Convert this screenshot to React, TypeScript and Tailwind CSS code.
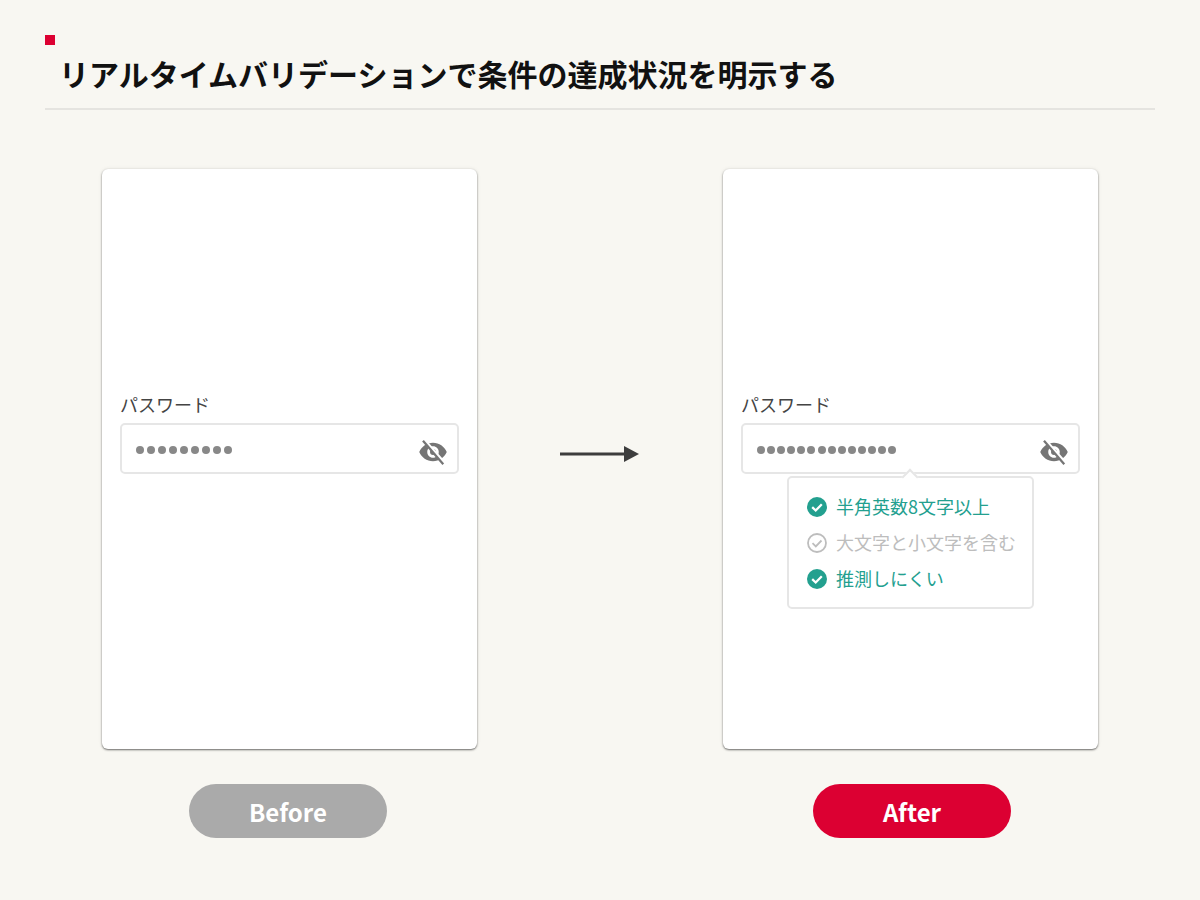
const FONT = "font-['Noto_Sans_CJK_JP','Noto_Sans',sans-serif]";

function EyeOff() {
  return (
    <svg width="30" height="30" viewBox="0 0 24 24" className="shrink-0">
      <path
        fill="#757575"
        fillRule="evenodd"
        d="M12 4.600C7 4.600 2.900 7.700 1 12c1.900 4.300 6 7.400 11 7.400s9.100-3.100 11-7.400c-1.900-4.300-6-7.400-11-7.400zM12 16.600c-2.600 0-4.600-2-4.600-4.600s2-4.600 4.600-4.600 4.600 2 4.600 4.600-2 4.600-4.600 4.600zm0-7c-1.350 0-2.400 1.050-2.400 2.400s1.050 2.400 2.400 2.400 2.400-1.050 2.400-2.400-1.050-2.400-2.400-2.400z"
      />
      <path d="M5 2.800 21 21" stroke="#ffffff" strokeWidth="2.800" />
      <path d="M4 3 20.200 21.800" stroke="#757575" strokeWidth="1.800" />
    </svg>
  );
}

function Check({ done }: { done: boolean }) {
  if (done) {
    return (
      <svg width="20" height="20" viewBox="0 0 20 20" className="shrink-0">
        <circle cx="10" cy="10" r="10" fill="#23a08f" />
        <path d="M5.200 10.200 8.700 13.500 14.800 7.300" fill="none" stroke="#ffffff" strokeWidth="2.300" />
      </svg>
    );
  }
  return (
    <svg width="20" height="20" viewBox="0 0 20 20" className="shrink-0">
      <circle cx="10" cy="10" r="9" fill="none" stroke="#bdbdbd" strokeWidth="1.800" />
      <path d="M5.500 10.200 8.800 13.400 14.500 7.500" fill="none" stroke="#bdbdbd" strokeWidth="1.800" />
    </svg>
  );
}

function PasswordField({ count, dotGap }: { count: number; dotGap: string }) {
  return (
    <div>
      <p className="mb-[5px] text-[18px] leading-[27px] text-[#444444]">パスワード</p>
      <div className="flex h-[51px] items-center justify-between rounded-[5px] border-2 border-[#e6e6e6] bg-white pl-[14px] pr-[9px]">
        <div className={`mt-[4px] flex ${dotGap}`}>
          {Array.from({ length: count }).map((_, i) => (
            <span key={i} className="size-[8px] rounded-full bg-[#888888]" />
          ))}
        </div>
        <div className="mt-[8px]">
          <EyeOff />
        </div>
      </div>
    </div>
  );
}

function Rule({ done, text }: { done: boolean; text: string }) {
  return (
    <li className={`flex h-[36px] items-center gap-[9px] text-[18px] ${done ? "text-[#23a08f]" : "text-[#bdbdbd]"}`}>
      <Check done={done} />
      <span className="whitespace-nowrap">{text}</span>
    </li>
  );
}

function Column({
  label,
  badgeClass,
  children,
}: {
  label: string;
  badgeClass: string;
  children: React.ReactNode;
}) {
  return (
    <div className="flex w-[375px] flex-col gap-[35px]">
      <div className="flex h-[580px] w-full flex-col justify-center rounded-[6px] bg-white px-[18px] pb-[54px] shadow-[0_1px_2px_rgba(0,0,0,0.55),0_0_4px_rgba(0,0,0,0.08)]">
        {children}
      </div>
      <div
        className={`flex h-[54px] w-[198px] items-center justify-center rounded-full pt-[2px] text-[24px] font-bold text-white ${badgeClass}`}
      >
        {label}
      </div>
    </div>
  );
}

export default function App() {
  return (
    <div className={`h-[900px] w-[1200px] overflow-hidden bg-[#f8f7f2] ${FONT}`}>
      {/* 見出し */}
      <header className="mx-[45px] border-b-2 border-[#e5e4e0] pt-[35px]">
        <div className="size-[10px] bg-[#dc0032]" />
        <h1 className="h-[63px] pl-[14px] text-[30px] font-bold leading-[57px] text-[#111111]">
          リアルタイムバリデーションで条件の達成状況を明示する
        </h1>
      </header>

      <main className="flex items-start justify-between px-[102px] pt-[59px]">
        <Column label="Before" badgeClass="ml-[87px] bg-[#aaaaaa]">
          <PasswordField count={9} dotGap="gap-[3px]" />
        </Column>

        <svg width="80" height="18" viewBox="0 0 80 18" className="mt-[276px] shrink-0">
          <path d="M0 9H66" stroke="#3d3d3d" strokeWidth="2.800" />
          <path d="M64 1 79 9 64 17z" fill="#3d3d3d" />
        </svg>

        <Column label="After" badgeClass="ml-[90px] bg-[#dc0032]">
          <div className="relative">
            <PasswordField count={14} dotGap="gap-[2.100px]" />
            {/* 条件のポップオーバー */}
            <div className="absolute left-[46px] top-[85px] w-[247px] rounded-[5px] border-2 border-[#e6e6e6] bg-white pb-[10px] pl-[18px] pt-[11px]">
              <span className="absolute left-[115px] top-[-7px] size-[12px] rotate-45 border-l-2 border-t-2 border-[#e6e6e6] bg-white" />
              <ul>
                <Rule done text="半角英数8文字以上" />
                <Rule done={false} text="大文字と小文字を含む" />
                <Rule done text="推測しにくい" />
              </ul>
            </div>
          </div>
        </Column>
      </main>
    </div>
  );
}
